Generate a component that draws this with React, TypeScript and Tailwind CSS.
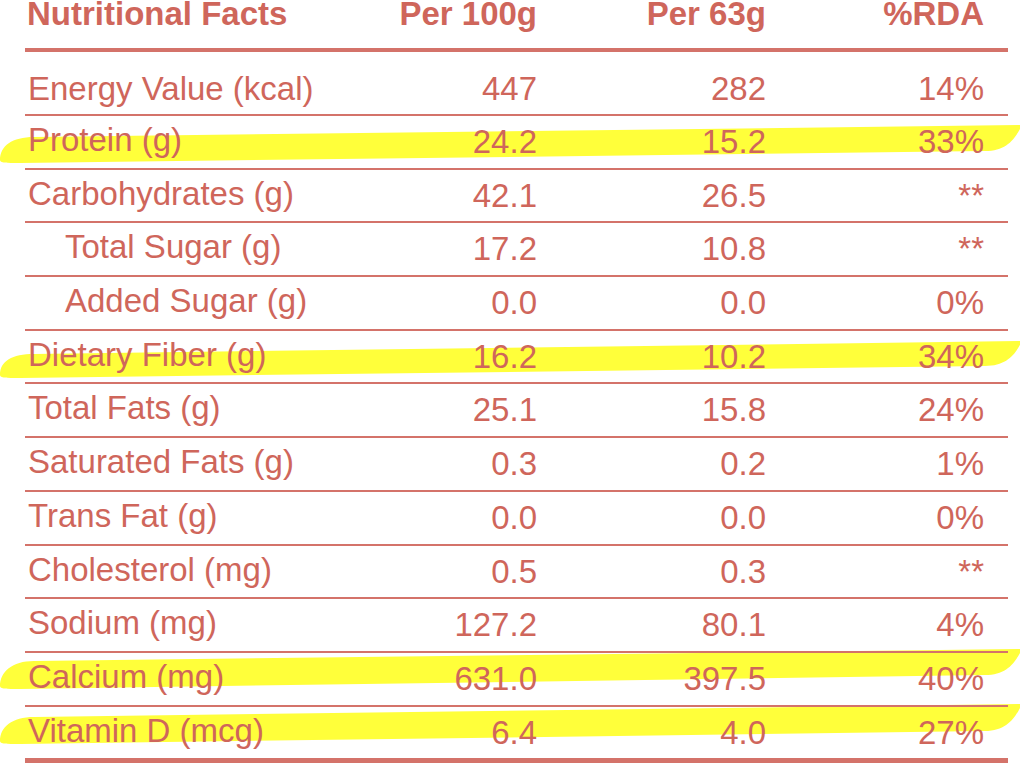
const rows = [
  { label: 'Protein (g)', a: '24.2', b: '15.2', c: '33%' },
  { label: 'Carbohydrates (g)', a: '42.1', b: '26.5', c: '**' },
  { label: 'Total Sugar (g)', a: '17.2', b: '10.8', c: '**', indent: true },
  { label: 'Added Sugar (g)', a: '0.0', b: '0.0', c: '0%', indent: true },
  { label: 'Dietary Fiber (g)', a: '16.2', b: '10.2', c: '34%' },
  { label: 'Total Fats (g)', a: '25.1', b: '15.8', c: '24%' },
  { label: 'Saturated Fats (g)', a: '0.3', b: '0.2', c: '1%' },
  { label: 'Trans Fat (g)', a: '0.0', b: '0.0', c: '0%' },
  { label: 'Cholesterol (mg)', a: '0.5', b: '0.3', c: '**' },
  { label: 'Sodium (mg)', a: '127.2', b: '80.1', c: '4%' },
  { label: 'Calcium (mg)', a: '631.0', b: '397.5', c: '40%' },
];

// highlighter strokes: top-left, top-right, bottom-left, bottom-right
const marks = [
  [137, 125, 162, 151],
  [354, 341, 377, 366],
  [661, 649, 688, 675],
  [717, 704, 743, 731],
];

const stroke = ([tl, tr, bl, br]: number[]) =>
  `M 0 ${bl - 2} C 0 ${bl - 16}, 12 ${tl}, 34 ${tl} L 1022 ${tr} C 1016 ${tr + 12}, 1008 ${br}, 985 ${br} L 20 ${bl + 1} C 6 ${bl + 1}, 0 ${bl + 1}, 0 ${bl - 2} Z`;

const Cells = ({ a, b, c }: { a: string; b: string; c: string }) => (
  <>
    <div className="w-[200px] text-right leading-[51px]">{a}</div>
    <div className="w-[229px] text-right leading-[51px]">{b}</div>
    <div className="w-[218px] text-right leading-[51px]">{c}</div>
  </>
);

export default function App() {
  return (
    <div
      className="relative w-[1020px] h-[763px] overflow-hidden bg-white text-[#cf665b] text-[33px]"
      style={{ fontFamily: '"Liberation Sans", Arial, sans-serif' }}
    >
      <svg className="absolute inset-0" width="1020" height="763" viewBox="0 0 1020 763">
        {marks.map((m, i) => (
          <path key={i} d={stroke(m)} fill="#ffff3a" />
        ))}
      </svg>

      <div className="relative z-10 ml-[25px] w-[983px]">
        <div className="flex h-[52px] pr-[24px] border-b-4 border-[#d4736a] font-bold leading-[28px]">
          <div className="w-[312px] pl-[2px]">Nutritional Facts</div>
          <div className="w-[200px] text-right">Per 100g</div>
          <div className="w-[229px] text-right">Per 63g</div>
          <div className="w-[218px] text-right">%RDA</div>
        </div>

        <div className="flex h-[64px] pt-[11px] pr-[24px] border-b-2 border-[#d4736a]">
          <div className="w-[312px] pl-[3px] leading-[51px]">Energy Value (kcal)</div>
          <Cells a="447" b="282" c="14%" />
        </div>

        {rows.map((r) => (
          <div key={r.label} className="flex h-[53.7px] pr-[24px] border-b-2 border-[#d4736a]">
            <div className={`w-[312px] leading-[48px] ${r.indent ? 'pl-[40px]' : 'pl-[3px]'}`}>{r.label}</div>
            <Cells a={r.a} b={r.b} c={r.c} />
          </div>
        ))}

        <div className="flex h-[56px] pr-[24px] border-b-[5px] border-[#d4736a]">
          <div className="w-[312px] pl-[3px] leading-[48px]">Vitamin D (mcg)</div>
          <Cells a="6.4" b="4.0" c="27%" />
        </div>
      </div>
    </div>
  );
}
